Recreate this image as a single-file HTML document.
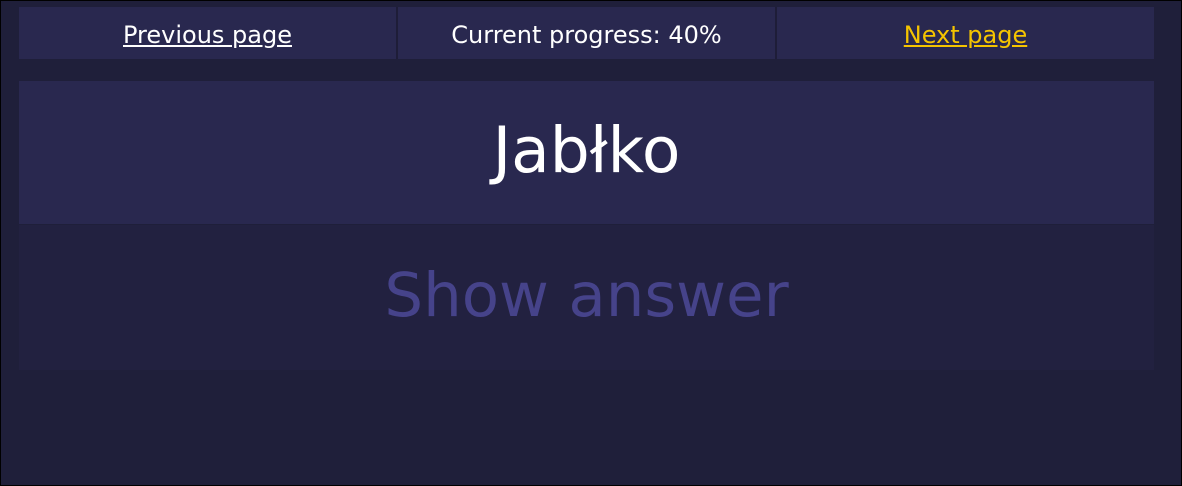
<!DOCTYPE html>
<html><head><meta charset="utf-8"><style>
html,body{margin:0;padding:0}
body{width:1180px;height:484px;border:1px solid #000;background:#1f1f3a;position:relative;font-family:"DejaVu Sans","Liberation Sans",sans-serif;overflow:hidden}
.nav{position:absolute;left:18px;top:6px;width:1135px;height:52px;display:flex;background:#1e1d38}
.nav div{background:#29284f;height:52px;display:flex;align-items:center;justify-content:center;font-size:24px;color:#fff;padding-top:3px;box-sizing:border-box}
.nav a{color:#fff;text-decoration:underline}
.q{position:absolute;left:18px;top:80px;width:1135px;height:143px;background:#29284f;color:#fff;font-size:63px;display:flex;align-items:center;justify-content:center;padding-bottom:4px;box-sizing:border-box}
.a{position:absolute;left:18px;top:224px;width:1135px;height:145px;background:#222140;color:#46438a;font-size:61px;display:flex;align-items:center;justify-content:center;padding-bottom:4px;box-sizing:border-box}
</style></head><body>
<div class="nav">
<div style="width:377px"><a>Previous page</a></div>
<div style="width:377px;margin-left:2px">Current progress: 40%</div>
<div style="width:377px;margin-left:2px"><a style="color:#f5c400">Next page</a></div>
</div>
<div class="q">Jabłko</div>
<div class="a">Show answer</div>
</body></html>
